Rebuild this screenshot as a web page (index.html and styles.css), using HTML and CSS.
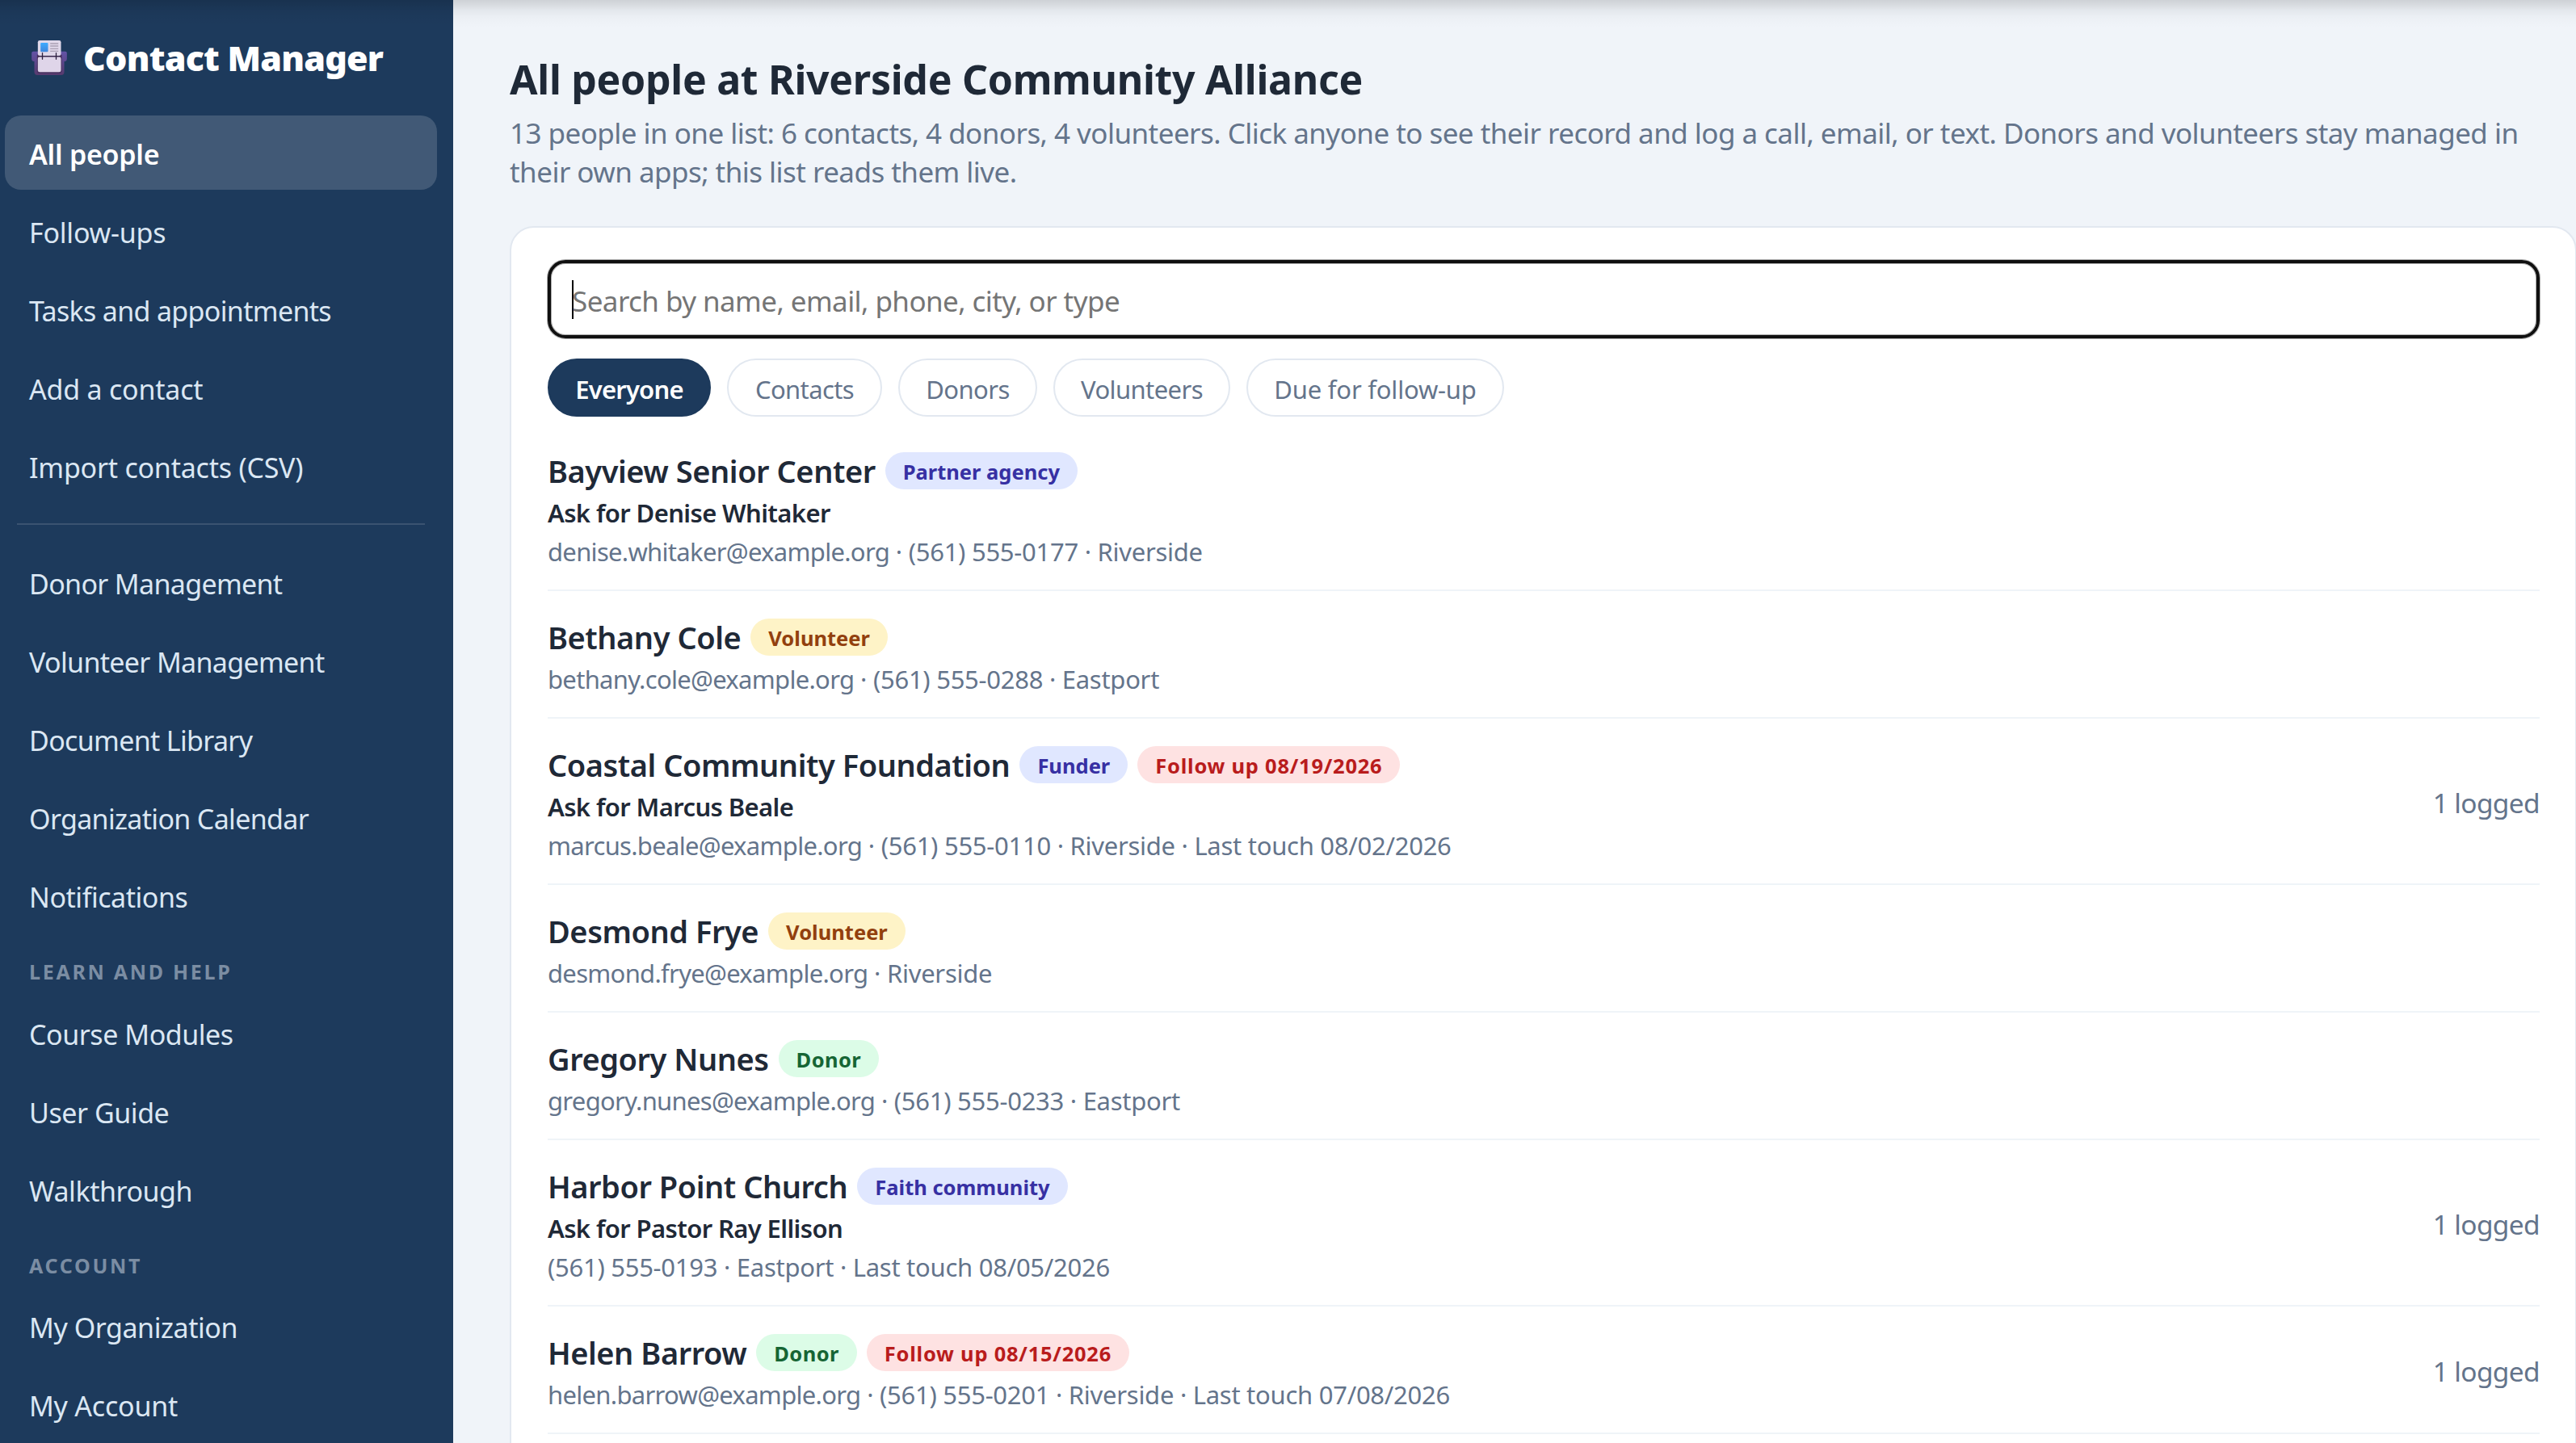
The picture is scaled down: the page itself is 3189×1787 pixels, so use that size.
FILE: index.html
```
<!DOCTYPE html>
<html lang="en">
<head>
<meta charset="utf-8">
<title>Contact Manager</title>
<link rel="stylesheet" href="styles.css">
</head>
<body>
<div class="app">
  <aside class="sidebar">
    <div class="brand">
      <svg class="brand-icon" viewBox="28 59 131 129" aria-hidden="true">
        <defs>
          <linearGradient id="case" x1="0" y1="0" x2="0" y2="1"><stop offset="0" stop-color="#6353a6"/><stop offset="1" stop-color="#563a6d"/></linearGradient>
          <linearGradient id="photo" x1="0" y1="0" x2="0" y2="1"><stop offset="0" stop-color="#3fabff"/><stop offset="1" stop-color="#3f86dc"/></linearGradient>
        </defs>
        <path d="M34 100H153Q159 100 159 106V127Q159 137 149 137V176Q149 188 137 188H50Q38 188 38 176V137Q28 137 28 127V106Q28 100 34 100Z" fill="url(#case)"/>
        <path d="M48 112H140V172Q140 181 131 181H57Q48 181 48 172Z" fill="#48305f"/>
        <rect x="51" y="59" width="86" height="57" rx="7" fill="#e0d8ea"/>
        <rect x="51" y="120" width="86" height="57" rx="7" fill="#dfd5e9"/>
        <rect x="61" y="68" width="28" height="34" rx="3" fill="url(#photo)"/>
        <path d="M97 71H127M97 80H127M97 90H127M97 99H127" stroke="#aaa0b4" stroke-width="4"/>
        <path d="M51 118H137" stroke="#35264a" stroke-width="4"/>
        <path d="M68 106V129M119 106V129" stroke="#2d2140" stroke-width="4" stroke-linecap="round"/>
      </svg>
      <span class="brand-name">Contact Manager</span>
    </div>
    <nav class="nav">
      <a class="nav-item active">All people</a>
      <a class="nav-item loose">Follow-ups</a>
      <a class="nav-item tight">Tasks and appointments</a>
      <a class="nav-item loose">Add a contact</a>
      <a class="nav-item loose">Import contacts (CSV)</a>
      <hr class="nav-rule">
      <a class="nav-item tight">Donor Management</a>
      <a class="nav-item tight">Volunteer Management</a>
      <a class="nav-item tight">Document Library</a>
      <a class="nav-item tight">Organization Calendar</a>
      <a class="nav-item">Notifications</a>
      <div class="nav-heading">LEARN AND HELP</div>
      <a class="nav-item">Course Modules</a>
      <a class="nav-item">User Guide</a>
      <a class="nav-item">Walkthrough</a>
      <div class="nav-heading">ACCOUNT</div>
      <a class="nav-item">My Organization</a>
      <a class="nav-item loose">My Account</a>
    </nav>
  </aside>
  <main class="main">
    <h1 class="title">All people at Riverside Community Alliance</h1>
    <p class="intro">13 people in one list: 6 contacts, 4 donors, 4 volunteers. Click anyone to see their record and log a call, email, or text. Donors and volunteers stay managed in<br>their own apps; this list reads them live.</p>
    <section class="card">
      <div class="search"><span class="caret"></span><span class="placeholder">Search by name, email, phone, city, or type</span></div>
      <div class="chips">
        <span class="chip chip-everyone on">Everyone</span>
        <span class="chip chip-contacts">Contacts</span>
        <span class="chip chip-donors">Donors</span>
        <span class="chip chip-volunteers">Volunteers</span>
        <span class="chip chip-due">Due for follow-up</span>
      </div>
      <div class="list">
        <div class="row">
          <div class="person">
            <div class="name-line"><span class="name">Bayview Senior Center</span><span class="badge contact">Partner agency</span></div>
            <div class="ask">Ask for Denise Whitaker</div>
            <div class="detail"><span class="mail">denise.whitaker@example.org</span> · (561) 555-0177 · Riverside</div>
          </div>
        </div>
        <div class="row">
          <div class="person">
            <div class="name-line"><span class="name">Bethany Cole</span><span class="badge volunteer">Volunteer</span></div>
            <div class="detail"><span class="mail">bethany.cole@example.org</span> · (561) 555-0288 · Eastport</div>
          </div>
        </div>
        <div class="row">
          <div class="person">
            <div class="name-line"><span class="name">Coastal Community Foundation</span><span class="badge contact">Funder</span><span class="badge due">Follow up 08/19/2026</span></div>
            <div class="ask">Ask for Marcus Beale</div>
            <div class="detail"><span class="mail">marcus.beale@example.org</span> · (561) 555-0110 · Riverside · Last touch 08/02/2026</div>
          </div>
          <div class="logged">1 logged</div>
        </div>
        <div class="row">
          <div class="person">
            <div class="name-line"><span class="name">Desmond Frye</span><span class="badge volunteer">Volunteer</span></div>
            <div class="detail"><span class="mail">desmond.frye@example.org</span> · Riverside</div>
          </div>
        </div>
        <div class="row">
          <div class="person">
            <div class="name-line"><span class="name">Gregory Nunes</span><span class="badge donor">Donor</span></div>
            <div class="detail"><span class="mail">gregory.nunes@example.org</span> · (561) 555-0233 · Eastport</div>
          </div>
        </div>
        <div class="row">
          <div class="person">
            <div class="name-line"><span class="name">Harbor Point Church</span><span class="badge contact">Faith community</span></div>
            <div class="ask">Ask for Pastor Ray Ellison</div>
            <div class="detail">(561) 555-0193 · Eastport · Last touch 08/05/2026</div>
          </div>
          <div class="logged">1 logged</div>
        </div>
        <div class="row">
          <div class="person">
            <div class="name-line"><span class="name">Helen Barrow</span><span class="badge donor">Donor</span><span class="badge due">Follow up 08/15/2026</span></div>
            <div class="detail"><span class="mail">helen.barrow@example.org</span> · (561) 555-0201 · Riverside · Last touch 07/08/2026</div>
          </div>
          <div class="logged">1 logged</div>
        </div>
      </div>
    </section>
  </main>
</div>
<div class="top-shade"></div>
</body>
</html>
```
FILE: styles.css
```
* { box-sizing: border-box; }
html, body { margin: 0; height: 100%; overflow: hidden; }
body {
  font-family: "Noto Sans", "Open Sans", sans-serif;
  background: #f0f4f9;
  color: #1f2937;
}
.app { display: flex; height: 1787px; overflow: hidden; }

/* Sidebar */
.sidebar {
  flex: none;
  width: 561px;
  padding: 0 20px 0 6px;
  background: #1d3a5c;
  color: #dbe7f3;
}
.brand {
  display: flex;
  align-items: center;
  gap: 20px;
  height: 143px;
  padding: 41px 0 41px 33px;
}
.brand-icon { flex: none; width: 44px; height: 43px; }
.brand-name {
  font-size: 43px;
  font-weight: 900;
  line-height: 61px;
  letter-spacing: -0.8px;
  white-space: nowrap;
  color: #fff;
}
.nav { display: flex; flex-direction: column; }
.nav-item {
  height: 92px;
  margin-bottom: 5px;
  padding: 4px 30px 0;
  border-radius: 20px;
  font-size: 34px;
  line-height: 89px;
  letter-spacing: -0.45px;
  white-space: nowrap;
}
.nav-item.tight { letter-spacing: -0.67px; }
.nav-item.loose { letter-spacing: -0.22px; }
.nav-item.active {
  background: rgba(255, 255, 255, 0.16);
  color: #fff;
  font-weight: 600;
  letter-spacing: -0.25px;
}
.nav-rule {
  width: auto;
  height: 2px;
  margin: 20px 15px 25px;
  border: 0;
  background: rgba(255, 255, 255, 0.13);
}
.nav-heading {
  margin: 23px 30px 9.5px;
  font-size: 25px;
  font-weight: 700;
  line-height: 40px;
  letter-spacing: 2.7px;
  color: #7b8da3;
}

/* Main column */
.main { flex: 1; min-width: 0; padding: 64px 0 0 70px; overflow: hidden; }
.title {
  margin: 0 0 9px;
  font-size: 50px;
  font-weight: 700;
  line-height: 68px;
  letter-spacing: -0.3px;
}
.intro {
  margin: 0 0 43px;
  font-size: 35px;
  line-height: 48px;
  letter-spacing: -0.54px;
  white-space: nowrap;
  color: #64748b;
}
.card {
  width: 2559px;
  height: 1600px;
  padding: 40px 44px 0 45px;
  border: 2px solid #e2e8f0;
  border-radius: 30px;
  background: #fff;
}
.search {
  display: flex;
  align-items: center;
  height: 97px;
  padding: 1px 26px 0;
  border: 4px solid #101010;
  border-radius: 22px;
  box-shadow: 0 0 0 1px rgba(16, 16, 16, 0.35), inset 0 0 0 1px rgba(16, 16, 16, 0.35);
}
.caret { width: 2px; height: 48px; margin-right: -2px; background: #000; }
.placeholder {
  padding-top: 4px;
  font-size: 35px;
  line-height: 48px;
  letter-spacing: -0.57px;
  color: #757575;
}
.chips { display: flex; gap: 20px; margin-top: 25px; }
.chip {
  height: 72px;
  padding-top: 2px;
  border: 2px solid #e2e8f0;
  border-radius: 36px;
  font-size: 31px;
  line-height: 68px;
  letter-spacing: -0.6px;
  text-align: center;
  white-space: nowrap;
  color: #64748b;
}
.chip.on {
  border-color: #1d3a5c;
  background: #1d3a5c;
  color: #fff;
  font-weight: 600;
  letter-spacing: -0.8px;
}
.chip-everyone { width: 202px; }
.chip-contacts { width: 192px; }
.chip-donors { width: 172px; }
.chip-volunteers { width: 219px; }
.chip-due { width: 319px; letter-spacing: -0.2px; }

/* People */
.list { margin-top: 10px; }
.row {
  display: flex;
  align-items: center;
  justify-content: space-between;
  padding: 28px 0 24px;
  border-bottom: 2px solid #eff4f8;
}
.name-line { display: flex; align-items: center; gap: 12px; height: 57px; }
.name {
  font-size: 38px;
  font-weight: 600;
  line-height: 56px;
  letter-spacing: -0.46px;
}
.badge {
  height: 46px;
  margin-top: 1px;
  padding: 2px 22px 0;
  border-radius: 23px;
  font-size: 25.5px;
  font-weight: 700;
  line-height: 45px;
  letter-spacing: 0;
}
.badge.contact { background: #e0e7ff; color: #3730a3; }
.badge.volunteer { background: #fef3c7; color: #92400e; }
.badge.donor { background: #dcfce7; color: #166534; letter-spacing: 0.4px; }
.badge.due { background: #fee2e2; color: #b91c1c; letter-spacing: 0.75px; }
.ask {
  font-size: 31px;
  font-weight: 600;
  line-height: 48px;
  letter-spacing: -0.62px;
}
.detail {
  margin-bottom: -1px;
  font-size: 31px;
  line-height: 48px;
  letter-spacing: -0.27px;
  color: #64748b;
}
.mail { letter-spacing: -0.7px; }
.logged {
  padding-bottom: 1px;
  font-size: 33.5px;
  line-height: 48px;
  letter-spacing: -0.65px;
  color: #64748b;
}

/* Shade cast over the top edge of the page */
.top-shade {
  position: absolute;
  top: 0;
  left: 0;
  right: 0;
  height: 34px;
  background: linear-gradient(rgba(0, 0, 0, 0.14), rgba(0, 0, 0, 0.1) 18%, rgba(0, 0, 0, 0.05) 38%, rgba(0, 0, 0, 0.018) 62%, transparent);
}
```
